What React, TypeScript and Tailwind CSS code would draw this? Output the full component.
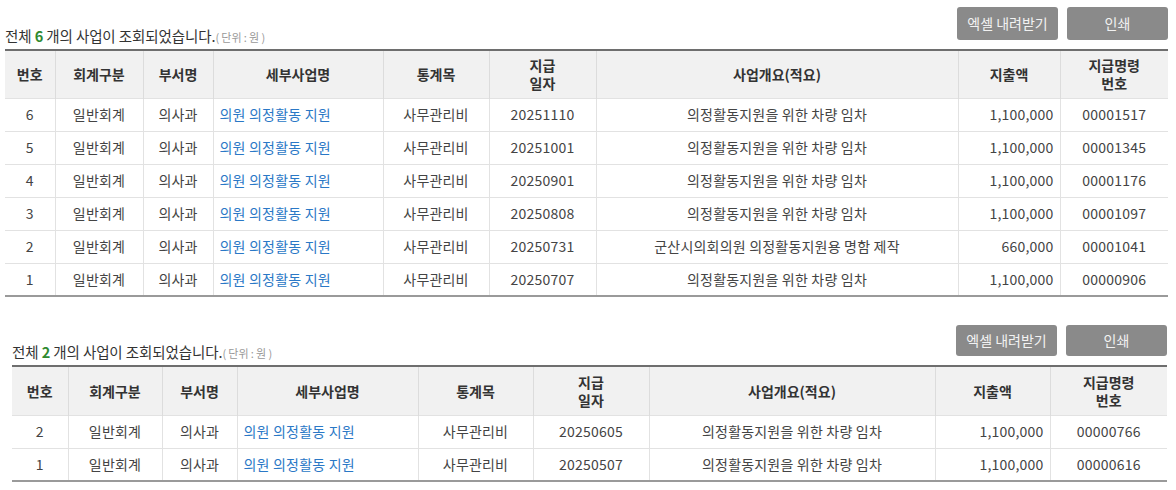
import React from 'react';

type Row = {
    no: number;
    acct: string;
    dept: string;
    biz: string;
    item: string;
    date: string;
    desc: string;
    amount: string;
    order: string;
};

const CAR = '의정활동지원을 위한 차량 임차';

const ROWS_A: Row[] = [
    { no: 6, acct: '일반회계', dept: '의사과', biz: '의원 의정활동 지원', item: '사무관리비', date: '20251110', desc: CAR, amount: '1,100,000', order: '00001517' },
    { no: 5, acct: '일반회계', dept: '의사과', biz: '의원 의정활동 지원', item: '사무관리비', date: '20251001', desc: CAR, amount: '1,100,000', order: '00001345' },
    { no: 4, acct: '일반회계', dept: '의사과', biz: '의원 의정활동 지원', item: '사무관리비', date: '20250901', desc: CAR, amount: '1,100,000', order: '00001176' },
    { no: 3, acct: '일반회계', dept: '의사과', biz: '의원 의정활동 지원', item: '사무관리비', date: '20250808', desc: CAR, amount: '1,100,000', order: '00001097' },
    { no: 2, acct: '일반회계', dept: '의사과', biz: '의원 의정활동 지원', item: '사무관리비', date: '20250731', desc: '군산시의회의원 의정활동지원용 명함 제작', amount: '660,000', order: '00001041' },
    { no: 1, acct: '일반회계', dept: '의사과', biz: '의원 의정활동 지원', item: '사무관리비', date: '20250707', desc: CAR, amount: '1,100,000', order: '00000906' },
];

const ROWS_B: Row[] = [
    { no: 2, acct: '일반회계', dept: '의사과', biz: '의원 의정활동 지원', item: '사무관리비', date: '20250605', desc: CAR, amount: '1,100,000', order: '00000766' },
    { no: 1, acct: '일반회계', dept: '의사과', biz: '의원 의정활동 지원', item: '사무관리비', date: '20250507', desc: CAR, amount: '1,100,000', order: '00000616' },
];

const FONT = { fontFamily: '"Noto Sans CJK KR", "Noto Sans", sans-serif' };

// --- RESULT BLOCK (count + buttons + table) ---
const ResultTable = ({
    rows,
    widths,
    btnH,
    headH,
    wrapClass,
}: {
    rows: Row[];
    widths: number[];
    btnH: string;
    headH: string;
    wrapClass: string;
}) => {
    const th = 'border-l border-[#dcdcdc] first:border-l-0 font-bold text-[#333] text-center leading-[18px] px-1';
    const td = 'border-l border-t border-[#e2e2e2] first:border-l-0 text-[#444] h-[33px] px-[6px] tracking-[0.2px]';

    return (
        <div className={wrapClass}>
            {/* header bar */}
            <div className="flex items-end justify-between">
                <p className="text-[14.5px] text-[#333] leading-none -mb-[3px] tracking-[-0.1px]">
                    전체 <b className="text-[#2f8a2f]">{rows.length}</b> 개의 사업이 조회되었습니다.
                    <span className="text-[11px] text-[#999] whitespace-pre">( 단위 : 원 )</span>
                </p>
                <div className="flex gap-[9px]">
                    <button className={`w-[101px] ${btnH} bg-[#8a8a8a] rounded-[3px] text-[#f2f2f2] text-[14px]`}>엑셀 내려받기</button>
                    <button className={`w-[101px] ${btnH} bg-[#8a8a8a] rounded-[3px] text-[#f2f2f2] text-[14px]`}>인쇄</button>
                </div>
            </div>

            {/* table */}
            <table className="mt-[9px] w-full table-fixed border-collapse text-[14px] border-t-2 border-t-[#6e6e6e] border-b-2 border-b-[#9a9a9a]">
                <colgroup>
                    {widths.map((w, i) => (
                        <col key={i} style={{ width: w }} />
                    ))}
                </colgroup>
                <thead>
                    <tr className={`bg-[#f1f1f1] ${headH}`}>
                        <th className={th}>번호</th>
                        <th className={th}>회계구분</th>
                        <th className={th}>부서명</th>
                        <th className={th}>세부사업명</th>
                        <th className={th}>통계목</th>
                        <th className={th}>지급<br />일자</th>
                        <th className={th}>사업개요(적요)</th>
                        <th className={th}>지출액</th>
                        <th className={th}>지급명령<br />번호</th>
                    </tr>
                </thead>
                <tbody>
                    {rows.map((r) => (
                        <tr key={r.order}>
                            <td className={`${td} text-center`}>{r.no}</td>
                            <td className={`${td} text-center`}>{r.acct}</td>
                            <td className={`${td} text-center`}>{r.dept}</td>
                            <td className={`${td} text-left`}>
                                <a className="text-[#2a78c6]">{r.biz}</a>
                            </td>
                            <td className={`${td} text-center`}>{r.item}</td>
                            <td className={`${td} text-center`}>{r.date}</td>
                            <td className={`${td} text-center`}>{r.desc}</td>
                            <td className={`${td} text-right`}>{r.amount}</td>
                            <td className={`${td} text-center`}>{r.order}</td>
                        </tr>
                    ))}
                </tbody>
            </table>
        </div>
    );
};

export default function App() {
    return (
        <div className="w-[1176px] h-[490px] bg-white overflow-hidden" style={FONT}>
            <ResultTable
                rows={ROWS_A}
                widths={[50, 88, 70, 170, 106, 107, 362, 102, 108]}
                btnH="h-[33px]"
                headH="h-[48px]"
                wrapClass="pt-[7px] pl-[5px] w-[1168px]"
            />
            <ResultTable
                rows={ROWS_B}
                widths={[56, 94, 75, 181, 115, 116, 286, 115, 117]}
                btnH="h-[31px]"
                headH="h-[49px]"
                wrapClass="pt-[28px] pl-[12px] w-[1167px]"
            />
        </div>
    );
}
